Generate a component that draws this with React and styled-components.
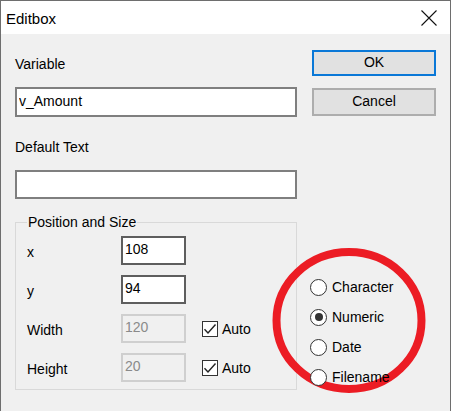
import React from "react";
import styled, { createGlobalStyle } from "styled-components";

const Global = createGlobalStyle`
  html, body { margin: 0; padding: 0; background: #f0f0f0; }
  body { font-family: "Liberation Sans", Arial, sans-serif; }
  * { box-sizing: border-box; }
`;

const Window = styled.div`
  width: 451px;
  height: 411px;
  border: 1px solid #6e6e6e;
  border-bottom: none;
  background: #f0f0f0;
  display: flex;
  flex-direction: column;
  position: relative;
  overflow: hidden;
`;

const TitleBar = styled.div`
  height: 33px;
  background: #ffffff;
  display: flex;
  align-items: center;
  justify-content: space-between;
  padding: 0 13px 0 5px;
`;

const Title = styled.span`
  font-family: "Liberation Sans", Arial, sans-serif;
  font-size: 15px;
  color: #000;
  margin-top: 2px;
`;

const CloseBox = styled.div`
  width: 16px;
  height: 16px;
  display: flex;
  align-items: center;
  justify-content: center;
`;

const Body = styled.div`
  flex: 1;
  display: grid;
  grid-template-columns: 282px 124px;
  column-gap: 15px;
  padding: 16px 14px 0 14px;
  font-size: 14px;
  color: #000;
`;

const Column = styled.div`
  display: flex;
  flex-direction: column;
`;

const Label = styled.div`
  height: 20px;
  line-height: 20px;
  margin-top: ${(p) => p.$mt || 0}px;
  margin-bottom: ${(p) => p.$mb || 0}px;
`;

const TextField = styled.input`
  display: block;
  width: ${(p) => p.$w || "100%"};
  height: ${(p) => p.$h || 29}px;
  border: ${(p) => (p.disabled ? "2px solid #cfcfcf" : p.$dark ? "2px solid #5e5e5e" : "2px solid #7f7f7f")};
  background: ${(p) => (p.disabled ? "#f0f0f0" : "#ffffff")};
  color: ${(p) => (p.disabled ? "#8a8a8a" : "#000")};
  font-family: "Liberation Sans", Arial, sans-serif;
  font-size: 14px;
  padding: 0 0 3px 2px;
  margin: 0;
  outline: none;
  -webkit-text-fill-color: ${(p) => (p.disabled ? "#8a8a8a" : "#000")};
  opacity: 1;
`;

const Group = styled.fieldset`
  margin: 13px 0 0 0;
  padding: 4px 10px 7px 11px;
  border: 1px solid #d9d9d9;
  min-width: 0;
  display: flex;
  flex-direction: column;
  gap: 10px;
`;

const Legend = styled.legend`
  padding: 0 1px;
  height: 20px;
  line-height: 20px;
  font-size: 14px;
`;

const Row = styled.div`
  display: grid;
  grid-template-columns: 94px 65px 16px 16px auto;
  align-items: center;
  height: 29px;
`;

const RowLabel = styled.span`
  line-height: 20px;
  padding-top: ${(p) => (p.$low ? 3 : 0)}px;
`;

const CheckBox = styled.span`
  grid-column: 4;
  width: 16px;
  height: 16px;
  border: 1px solid #333333;
  background: #ffffff;
  display: flex;
  align-items: center;
  justify-content: center;
`;

const CheckLabel = styled.span`
  padding-left: 4px;
`;

const Button = styled.button`
  display: block;
  width: 124px;
  height: ${(p) => (p.$default ? 26 : 28)}px;
  margin: ${(p) => p.$mt || 0}px 0 0 0;
  background: #e1e1e1;
  border: 2px solid ${(p) => (p.$default ? "#0a78d7" : "#adadad")};
  font-family: "Liberation Sans", Arial, sans-serif;
  font-size: 14px;
  color: #000;
  padding: 0 0 2px 0;
`;

const RadioList = styled.div`
  display: flex;
  flex-direction: column;
  margin: 156px 0 0 -2px;
  position: relative;
  z-index: 2;
`;

const RadioRow = styled.label`
  display: flex;
  align-items: center;
  gap: 5px;
  height: 30px;
  font-size: 14px;
`;

const RadioDot = styled.span`
  width: 17px;
  height: 17px;
  border-radius: 50%;
  border: 1px solid #333333;
  background: #ffffff;
  display: flex;
  align-items: center;
  justify-content: center;
  &::after {
    content: "";
    width: 8px;
    height: 8px;
    border-radius: 50%;
    background: ${(p) => (p.$checked ? "#333333" : "transparent")};
  }
`;

const Highlight = styled.svg`
  position: absolute;
  left: 269px;
  top: 244px;
  width: 160px;
  height: 152px;
  pointer-events: none;
  z-index: 1;
`;

const Check = () => (
  <svg width="14" height="14" viewBox="0 0 14 14">
    <path d="M1.5 7.2 L5 11 L12.5 2.5" fill="none" stroke="#222" strokeWidth="1.4" />
  </svg>
);

const radios = [
  { label: "Character", checked: false },
  { label: "Numeric", checked: true },
  { label: "Date", checked: false },
  { label: "Filename", checked: false },
];

export default function App() {
  return (
    <>
      <Global />
      <Window>
        <Highlight viewBox="0 0 160 152">
          <ellipse cx="79" cy="75.5" rx="72.5" ry="68.5" fill="none" stroke="#ec1c24" strokeWidth="8" />
        </Highlight>
        <TitleBar>
          <Title>Editbox</Title>
          <CloseBox>
            <svg width="16" height="16" viewBox="0 0 16 16">
              <path d="M0.5 0.5 L15.5 15.5 M15.5 0.5 L0.5 15.5" stroke="#111" strokeWidth="1.1" />
            </svg>
          </CloseBox>
        </TitleBar>
        <Body>
          <Column>
            <Label $mt={4} $mb={13}>Variable</Label>
            <TextField readOnly defaultValue="v_Amount" $h={30} />
            <Label $mt={20} $mb={13}>Default Text</Label>
            <TextField readOnly defaultValue="" $h={29} />
            <Group>
              <Legend>Position and Size</Legend>
              <Row>
                <RowLabel $low>x</RowLabel>
                <TextField readOnly defaultValue="108" $dark />
              </Row>
              <Row>
                <RowLabel $low>y</RowLabel>
                <TextField readOnly defaultValue="94" $dark />
              </Row>
              <Row>
                <RowLabel $low>Width</RowLabel>
                <TextField disabled defaultValue="120" />
                <CheckBox><Check /></CheckBox>
                <CheckLabel>Auto</CheckLabel>
              </Row>
              <Row>
                <RowLabel $low>Height</RowLabel>
                <TextField disabled defaultValue="20" />
                <CheckBox><Check /></CheckBox>
                <CheckLabel>Auto</CheckLabel>
              </Row>
            </Group>
          </Column>
          <Column>
            <Button $default>OK</Button>
            <Button $mt={12}>Cancel</Button>
            <RadioList>
              {radios.map((r) => (
                <RadioRow key={r.label}>
                  <RadioDot $checked={r.checked} />
                  {r.label}
                </RadioRow>
              ))}
            </RadioList>
          </Column>
        </Body>
      </Window>
    </>
  );
}
